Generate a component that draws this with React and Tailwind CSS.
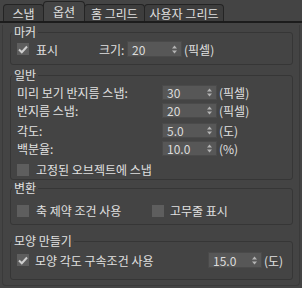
import React from 'react';

const Check = ({ checked }) => (
  <div className="w-[12px] h-[12px] bg-[#5e5e5e] flex items-center justify-center shrink-0">
    {checked && (
      <svg width="10" height="9" viewBox="0 0 10 9">
        <path d="M1 4.5 L3.8 7.2 L9 1.5" fill="none" stroke="#cfcfcf" strokeWidth="2" />
      </svg>
    )}
  </div>
);

const Spinner = ({ value, w = 'w-[55px]', h = 'h-[15px]' }) => (
  <div className={`${w} ${h} bg-[#575757] border border-[#4a4a4a] flex items-center justify-between pl-[4px] pr-[4px] shrink-0`}>
    <span className="text-[12px] leading-[13px] text-[#dcdcdc]">{value}</span>
    <svg width="5" height="9" viewBox="0 0 5 9">
      <path d="M2.5 0.5 L5 3.5 L0 3.5 Z" fill="#b4b4b4" />
      <path d="M0 5.5 L5 5.5 L2.5 8.5 Z" fill="#b4b4b4" />
    </svg>
  </div>
);

const Group = ({ title, className, children }) => (
  <fieldset className={`border border-[#363636] rounded-[3px] ${className}`}>
    <legend className="ml-[1px] px-[2px] text-[12px] leading-[14px]">{title}</legend>
    {children}
  </fieldset>
);

export default function App() {
  const tabs = [
    { label: '스냅', w: 'w-[41px]' },
    { label: '옵션', w: 'w-[42px]', active: true },
    { label: '홈 그리드', w: 'w-[61px]' },
    { label: '사용자 그리드', w: 'w-[80px]' },
  ];

  const rows = [
    { label: '미리 보기 반지름 스냅:', value: '30', unit: '(픽셀)', mt: '' },
    { label: '반지름 스냅:', value: '20', unit: '(픽셀)', mt: 'mt-[3px]' },
    { label: '각도:', value: '5.0', unit: '(도)', mt: 'mt-[5px]' },
    { label: '백분율:', value: '10.0', unit: '(%)', mt: 'mt-[3px]' },
  ];

  return (
    <div className="w-[302px] h-[288px] bg-[#444444] text-[#e0e0e0] overflow-hidden font-['Noto_Sans_CJK_KR','Noto_Sans',sans-serif] text-[12px] leading-[15px]">
      {/* tabs */}
      <div className="h-[21px] flex items-end pl-[3px]">
        {tabs.map((t, i) => (
          <div
            key={t.label}
            className={`${t.w} ${i > 0 ? '-ml-px' : ''} ${t.active ? 'h-[20px] bg-[#454545]' : 'h-[17px] bg-[#3d3d3d]'} border border-b-0 border-[#242424] rounded-t-[4px] flex items-center justify-center whitespace-nowrap`}
          >
            {t.label}
          </div>
        ))}
      </div>
      <div className="h-[2px] bg-[#1c1c1c]" />

      {/* panel */}
      <div className="mx-[2px] h-[261px] border-x border-b border-[#3a3a3a] rounded-b-[4px] pl-[7px] pr-[6px]">
        <Group title="마커" className="mt-[2px]">
          <div className="pl-[6px] pt-[2px] pb-[7px] flex items-center h-[25px]">
            <div className="w-[82px] flex items-center">
              <Check checked />
              <span className="ml-[7px]">표시</span>
            </div>
            <span className="w-[28px]">크기:</span>
            <Spinner value="20" h="h-[16px]" />
            <span className="ml-[2px]">(픽셀)</span>
          </div>
        </Group>

        <Group title="일반" className="mt-[3px]">
          <div className="pl-[6px] pt-[3px] pb-[2px]">
            {rows.map((r) => (
              <div key={r.label} className={`flex items-center h-[15px] ${r.mt}`}>
                <span className="w-[145px]">{r.label}</span>
                <Spinner value={r.value} />
                <span className="ml-[2px]">{r.unit}</span>
              </div>
            ))}
            <div className="flex items-center h-[15px] mt-[6px]">
              <Check />
              <span className="ml-[7px]">고정된 오브젝트에 스냅</span>
            </div>
          </div>
        </Group>

        <Group title="변환" className="mt-[1px]">
          <div className="pl-[6px] pt-[8px] pb-[6px] flex items-center">
            <div className="w-[135px] h-[15px] flex items-center">
              <Check />
              <span className="ml-[7px]">축 제약 조건 사용</span>
            </div>
            <Check />
            <span className="ml-[6px]">고무줄 표시</span>
          </div>
        </Group>

        <Group title="모양 만들기" className="mt-[9px]">
          <div className="pl-[6px] pt-[4px] pb-[11px] flex items-center">
            <div className="w-[191px] h-[16px] flex items-center">
              <Check checked />
              <span className="ml-[6px]">모양 각도 구속조건 사용</span>
            </div>
            <Spinner value="15.0" w="w-[54px]" h="h-[16px]" />
            <span className="ml-[2px]">(도)</span>
          </div>
        </Group>
      </div>
    </div>
  );
}
